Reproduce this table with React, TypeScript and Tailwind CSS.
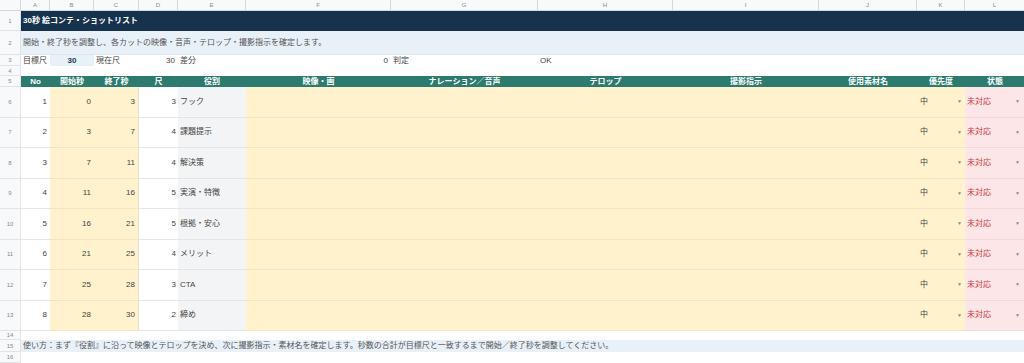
import React from "react";

const GRID =
  "grid grid-cols-[21px_29px_44px_45px_39px_68px_145px_147px_135px_146px_98px_48px_60px]";

const letters = ["A", "B", "C", "D", "E", "F", "G", "H", "I", "J", "K", "L"];

const headers = [
  "No",
  "開始秒",
  "終了秒",
  "尺",
  "役割",
  "映像・画",
  "ナレーション／音声",
  "テロップ",
  "撮影指示",
  "使用素材名",
  "優先度",
  "状態",
];

const shots = [
  { no: 1, start: 0, end: 3, len: 3, role: "フック" },
  { no: 2, start: 3, end: 7, len: 4, role: "課題提示" },
  { no: 3, start: 7, end: 11, len: 4, role: "解決策" },
  { no: 4, start: 11, end: 16, len: 5, role: "実演・特徴" },
  { no: 5, start: 16, end: 21, len: 5, role: "根拠・安心" },
  { no: 6, start: 21, end: 25, len: 4, role: "メリット" },
  { no: 7, start: 25, end: 28, len: 3, role: "CTA" },
  { no: 8, start: 28, end: 30, len: 2, role: "締め" },
];

function RowNum({ n }: { n?: number }) {
  return (
    <div className="flex items-center justify-center bg-[#f8f9fa] border-r border-b border-[#e1e3e6] text-[6px] text-[#8a8a8a]">
      {n}
    </div>
  );
}

function Arrow() {
  return <span className="text-[5px] text-[#8a8a8a] leading-none">▼</span>;
}

export default function App() {
  return (
    <div className="w-[1024px] h-[363px] overflow-hidden bg-white font-['Liberation_Sans','Noto_Sans_CJK_JP',sans-serif] text-[8px] leading-none text-[#444]">
      {/* column letters */}
      <div className={`${GRID} h-[11px]`}>
        <div className="bg-[#f8f9fa] border-r border-b border-[#d6d8db]" />
        {letters.map((l) => (
          <div
            key={l}
            className="flex items-center justify-center bg-[#f8f9fa] border-r border-b border-[#d6d8db] text-[6px] text-[#8a8a8a]"
          >
            {l}
          </div>
        ))}
      </div>

      {/* row 1: title */}
      <div className={`${GRID} h-[20px]`}>
        <RowNum n={1} />
        <div className="col-span-12 flex items-center pl-[2px] bg-[#17324d] text-white font-bold text-[8px]">
          30秒 絵コンテ・ショットリスト
        </div>
      </div>

      {/* row 2: description */}
      <div className={`${GRID} h-[24px]`}>
        <RowNum n={2} />
        <div className="col-span-12 flex items-center pl-[2px] bg-[#e8f0f8] border-b border-[#dfe6ee] text-[#555]">
          開始・終了秒を調整し、各カットの映像・音声・テロップ・撮影指示を確定します。
        </div>
      </div>

      {/* row 3: summary */}
      <div className={`${GRID} h-[11px]`}>
        <RowNum n={3} />
        <div className="flex items-center pl-[2px] whitespace-nowrap text-[#444]">目標尺</div>
        <div className="flex items-center justify-center bg-[#e8f0f8] font-bold text-[#1f3a5a]">30</div>
        <div className="flex items-center pl-[2px] whitespace-nowrap">現在尺</div>
        <div className="flex items-center justify-end pr-[3px]">30</div>
        <div className="flex items-center pl-[2px]">差分</div>
        <div className="flex items-center justify-end pr-[3px]">0</div>
        <div className="flex items-center pl-[2px]">判定</div>
        <div className="flex items-center pl-[2px]">OK</div>
        <div />
        <div />
        <div />
        <div />
      </div>

      {/* row 4 */}
      <div className={`${GRID} h-[10px]`}>
        <RowNum n={4} />
        <div className="col-span-12" />
      </div>

      {/* row 5: table header */}
      <div className={`${GRID} h-[11px]`}>
        <RowNum n={5} />
        {headers.map((h) => (
          <div
            key={h}
            className="flex items-center justify-center bg-[#2d7a6f] text-white font-bold whitespace-nowrap"
          >
            {h}
          </div>
        ))}
      </div>

      {/* shot rows */}
      {shots.map((s, i) => (
        <div key={s.no} className={`${GRID} h-[30.5px]`}>
          <RowNum n={i + 6} />
          <div className="flex items-center justify-end pr-[3px] border-b border-[#e6e6e6]">{s.no}</div>
          <div className="flex items-center justify-end pr-[3px] bg-[#fff2cc] border-b border-[#f0e6c4]">{s.start}</div>
          <div className="flex items-center justify-end pr-[3px] bg-[#fff2cc] border-b border-[#f0e6c4] border-r border-r-[#e6e0cc]">{s.end}</div>
          <div className="flex items-center justify-end pr-[2px] border-b border-[#e6e6e6]">{s.len}</div>
          <div className="flex items-center pl-[2px] bg-[#f3f4f6] border-b border-[#e3e5e8]">{s.role}</div>
          <div className="bg-[#fff2cc] border-b border-[#f0e6c4]" />
          <div className="bg-[#fff2cc] border-b border-[#f0e6c4]" />
          <div className="bg-[#fff2cc] border-b border-[#f0e6c4]" />
          <div className="bg-[#fff2cc] border-b border-[#f0e6c4]" />
          <div className="bg-[#fff2cc] border-b border-[#f0e6c4]" />
          <div className="flex items-center justify-between pl-[3px] pr-[3px] bg-[#fff2cc] border-b border-[#f0e6c4]">
            <span>中</span>
            <Arrow />
          </div>
          <div className="flex items-center justify-between pl-[2px] pr-[5px] bg-[#fce6e8] border-b border-[#f2d8db]">
            <span className="text-[#cc3b3b]">未対応</span>
            <Arrow />
          </div>
        </div>
      ))}

      {/* row 14 */}
      <div className={`${GRID} h-[9px]`}>
        <RowNum n={14} />
        <div className="col-span-12" />
      </div>

      {/* row 15: usage note */}
      <div className={`${GRID} h-[12px]`}>
        <RowNum n={15} />
        <div className="col-span-12 flex items-center pl-[2px] bg-[#e8f0f8] text-[#555] whitespace-nowrap">
          使い方：まず『役割』に沿って映像とテロップを決め、次に撮影指示・素材名を確定します。秒数の合計が目標尺と一致するまで開始／終了秒を調整してください。
        </div>
      </div>

      {/* row 16 */}
      <div className={`${GRID} h-[11px]`}>
        <RowNum n={16} />
        <div className="col-span-12" />
      </div>
    </div>
  );
}
